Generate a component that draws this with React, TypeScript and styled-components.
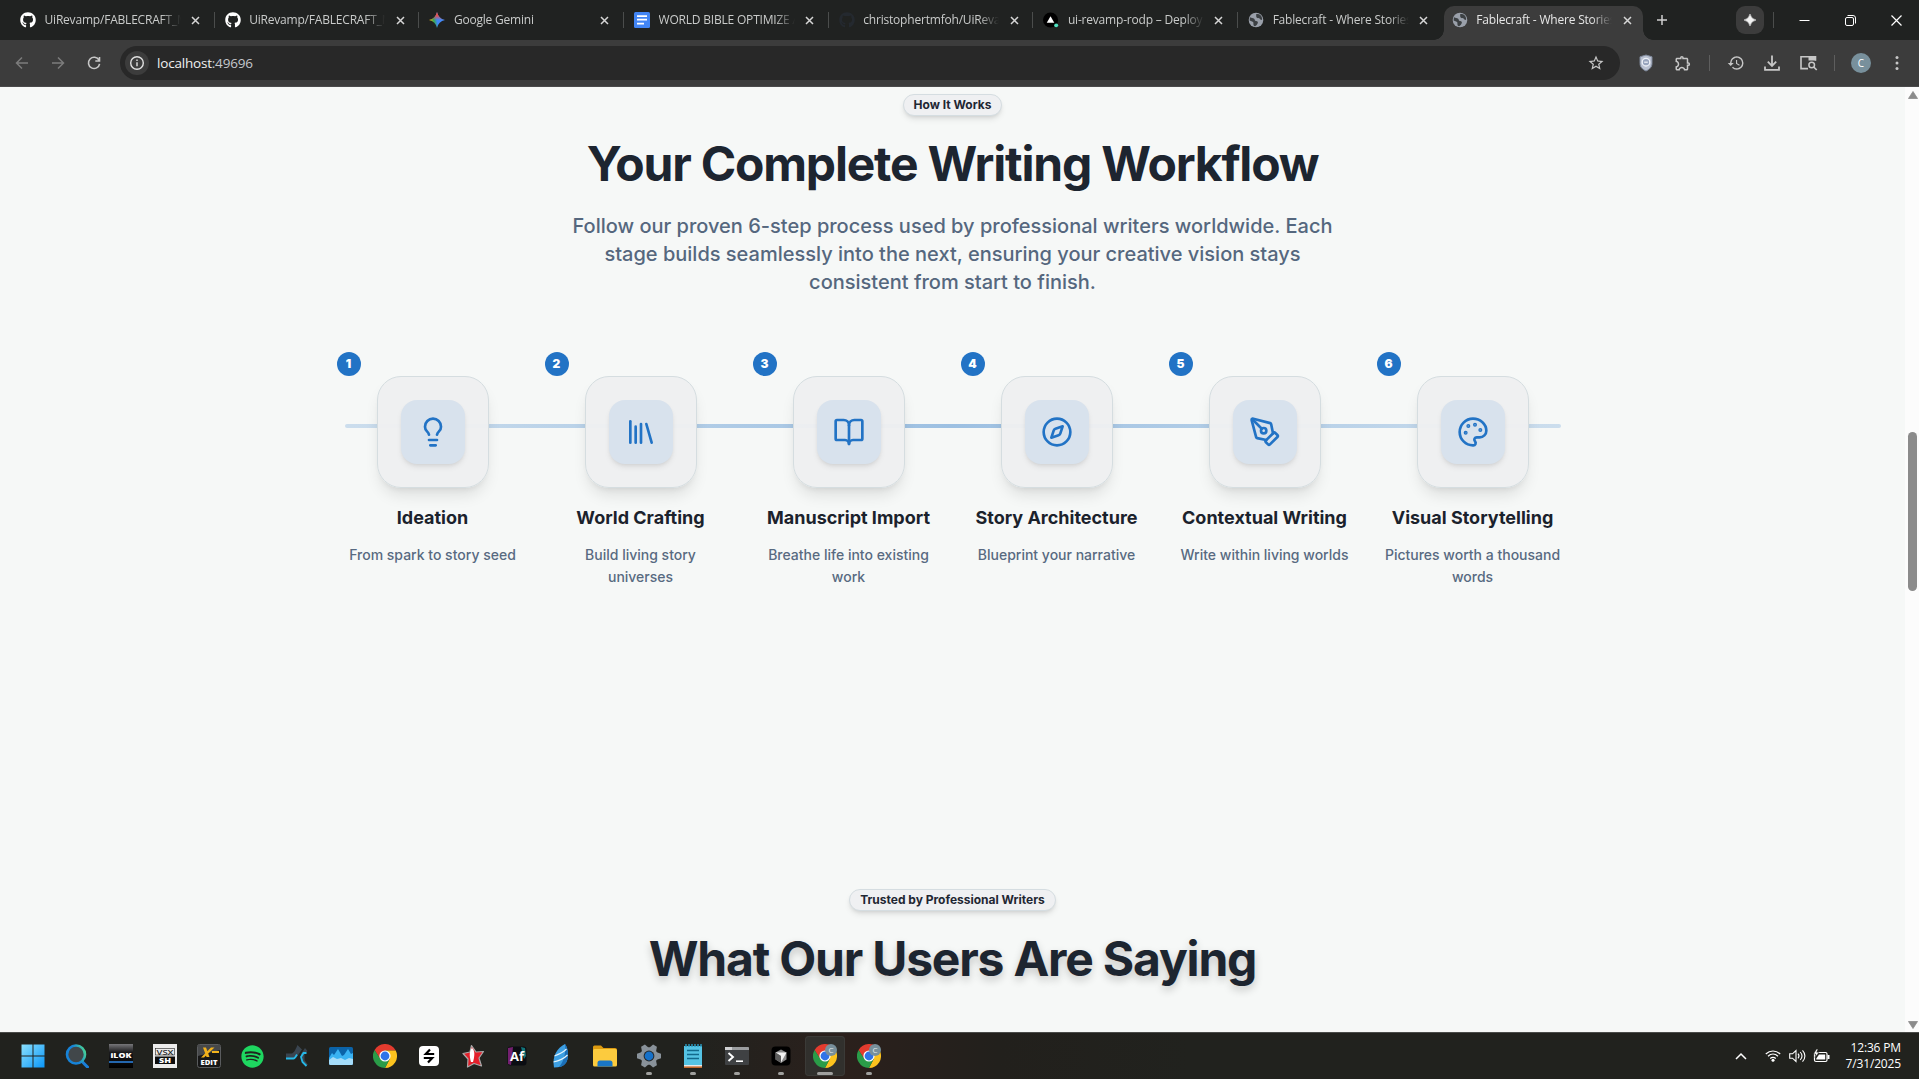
import React from 'react';
import styled, { createGlobalStyle, css } from 'styled-components';
import { Lightbulb, BookOpen, Compass, PenTool, Palette } from 'lucide-react';
import { FaGithub, FaSpotify } from 'react-icons/fa';
import { MdOutlineExtension, MdHistory, MdStarOutline } from 'react-icons/md';

const Global = createGlobalStyle`
  * { box-sizing: border-box; }
  body { margin: 0; background: #f6f8f7; overflow: hidden; }
`;

const ui = `'Segoe UI', 'Open Sans', 'Noto Sans', sans-serif`;

const Screen = styled.div`
  width: 1919px;
  height: 1079px;
  display: flex;
  flex-direction: column;
  overflow: hidden;
  font-family: 'Inter', sans-serif;
`;

/* ---------- browser chrome ---------- */

const TabStrip = styled.div`
  height: 40px;
  flex: none;
  display: flex;
  background: #202221;
  padding-left: 10px;
  font-family: ${ui};
`;

const Tab = styled.div<{ $active?: boolean; $line?: boolean }>`
  position: relative;
  width: 204.7px;
  flex: none;
  height: 34px;
  margin-top: 6px;
  padding: 0 10px 6px 10px;
  display: flex;
  align-items: center;
  color: #c9cbca;
  ${p => p.$line && css`
    &::after {
      content: '';
      position: absolute;
      right: 0;
      top: 6px;
      width: 1px;
      height: 16px;
      background: #4b4d4c;
    }
  `}
  ${p => p.$active && css`
    width: 199px;
    margin-left: 1px;
    padding-left: 8px;
    background: #3c3c3c;
    border-radius: 10px 10px 0 0;
    color: #e6e6e6;
    &::before, &::after {
      content: '';
      position: absolute;
      bottom: 0;
      width: 10px;
      height: 10px;
    }
    &::before { left: -10px; background: radial-gradient(circle at 0 0, transparent 9.5px, #3c3c3c 10px); }
    &::after { right: -10px; background: radial-gradient(circle at 100% 0, transparent 9.5px, #3c3c3c 10px); }
  `}
`;

const Favicon = styled.span`
  width: 16px;
  height: 16px;
  flex: none;
  display: flex;
  svg { display: block; }
`;

const TabTitle = styled.span`
  width: 138px;
  flex: none;
  margin-left: 8.5px;
  font-size: 12px;
  line-height: 16px;
  letter-spacing: -0.2px;
  white-space: nowrap;
  mask-image: linear-gradient(90deg, #000 116px, transparent 136px);
`;

const TabClose = styled.span`
  margin-left: 8.5px;
  display: flex;
`;

const StripEnd = styled.div`
  flex: 1;
  display: flex;
  align-items: center;
  padding-bottom: 0;
  color: #dcdcdc;
`;

const NewTab = styled.span`
  display: flex;
  margin: 0 0 0 13px;
`;

const SparkButton = styled.div`
  width: 28px;
  height: 28px;
  margin-left: auto;
  border-radius: 9px;
  background: #3c3c3c;
  display: flex;
  align-items: center;
  justify-content: center;
`;

const WindowButtons = styled.div`
  margin-left: 9px;
  border-left: 1px solid #4b4d4c;
  height: 16px;
  width: 146px;
  padding-left: 25px;
  display: flex;
  align-items: center;
  gap: 35px;
  svg { display: block; flex: none; }
`;

const Toolbar = styled.div`
  height: 47px;
  flex: none;
  display: flex;
  align-items: center;
  background: #3c3c3c;
  border-bottom: 1px solid #4a4a4b;
  padding: 0 0 0 12px;
  font-family: ${ui};
  color: #c7c7c7;
`;

const ToolSlot = styled.span<{ $dim?: boolean }>`
  width: 36px;
  flex: none;
  display: flex;
  justify-content: center;
  color: ${p => (p.$dim ? '#7c7c7c' : '#c7c7c7')};
`;

const ExtensionGroup = styled.div`
  display: flex;
  align-items: center;
  gap: 1px;
  margin-left: 8px;
`;

const NavGroup = styled.div`
  display: flex;
  width: 108px;
  margin-left: -8px;
`;

const Omnibox = styled.div`
  width: 1500px;
  height: 34px;
  flex: none;
  margin-left: 8px;
  border-radius: 17px;
  background: #282828;
  display: flex;
  align-items: center;
  padding: 0 15px 0 5px;
`;

const InfoChip = styled.span`
  width: 24px;
  height: 24px;
  border-radius: 12px;
  background: #3c3c3c;
  display: flex;
  align-items: center;
  justify-content: center;
`;

const Url = styled.span`
  flex: 1;
  margin-left: 8px;
  font-size: 13.5px;
  letter-spacing: -0.2px;
  color: #f0f0f0;
  span { color: #c4c7cc; }
`;

const ToolSeparator = styled.span`
  width: 1px;
  height: 16px;
  margin: 0 8px;
  background: #5e5e5e;
`;

const Avatar = styled.span`
  width: 20px;
  height: 20px;
  border-radius: 10px;
  background: #78909c;
  color: #fff;
  font-size: 10px;
  line-height: 20px;
  text-align: center;
`;

/* ---------- page ---------- */

const Viewport = styled.div`
  height: 945px;
  flex: none;
  display: flex;
  background: #f6f8f7;
`;

const Page = styled.main`
  width: 1905px;
  height: 945px;
  overflow: hidden;
  display: flex;
  flex-direction: column;
  align-items: center;
  padding-top: 7px;
`;

const Pill = styled.span`
  height: 22px;
  padding: 0 10px;
  border: 1px solid #d5dde1;
  border-radius: 11px;
  background: #eff0f2;
  box-shadow: 0 4px 6px -1px rgba(0, 0, 0, 0.1), 0 2px 4px -2px rgba(0, 0, 0, 0.12);
  color: #1f2733;
  font-size: 12px;
  font-weight: 700;
  letter-spacing: -0.01px;
  line-height: 20px;
`;

const Heading = styled.h2<{ $raised?: boolean }>`
  margin: 24px 0 0;
  font-size: 48px;
  line-height: 48px;
  font-weight: 700;
  letter-spacing: -0.025em;
  color: #1d2530;
  text-shadow: ${p => (p.$raised ? '0 4px 8px rgba(0, 0, 0, 0.2)' : 'none')};
`;

const Lead = styled.p`
  width: 768px;
  margin: 24px 0 0;
  font-size: 20px;
  line-height: 28px;
  font-weight: 500;
  text-align: center;
  color: #55677e;
`;

const Steps = styled.section`
  position: relative;
  width: 1216px;
  height: 529px;
  flex: none;
  margin-top: 64px;
  display: grid;
  grid-template-columns: repeat(6, 176px);
  column-gap: 32px;
  align-content: start;
`;

const Rail = styled.div`
  position: absolute;
  left: 0;
  right: 0;
  top: 64px;
  height: 4px;
  border-radius: 2px;
  background: linear-gradient(90deg, rgba(34, 115, 197, 0.2), rgba(34, 115, 197, 0.42), rgba(34, 115, 197, 0.2));
`;

const Step = styled.article`
  position: relative;
  padding-top: 16px;
  display: flex;
  flex-direction: column;
  align-items: center;
  text-align: center;
`;

const StepNumber = styled.span`
  position: absolute;
  left: -8px;
  top: -8px;
  width: 24px;
  height: 24px;
  border-radius: 12px;
  background: #2273c5;
  color: #fff;
  font-size: 12px;
  font-weight: 900;
  line-height: 24px;
`;

const StepCard = styled.div`
  width: 112px;
  height: 112px;
  padding: 23px;
  border: 1px solid #d5dde0;
  border-radius: 24px;
  background: rgba(238, 239, 241, 0.97);
  box-shadow: 0 10px 15px -3px rgba(0, 0, 0, 0.1), 0 4px 6px -4px rgba(0, 0, 0, 0.1);
`;

const StepTile = styled.div`
  width: 64px;
  height: 64px;
  border-radius: 16px;
  background: #d8e2ed;
  box-shadow: 0 4px 6px -1px rgba(0, 0, 0, 0.08), 0 2px 4px -2px rgba(0, 0, 0, 0.1);
  color: #2273c5;
  display: flex;
  align-items: center;
  justify-content: center;
`;

const StepTitle = styled.h3`
  margin: 16px 0 0;
  font-size: 18px;
  line-height: 28px;
  font-weight: 700;
  white-space: nowrap;
  color: #1b222c;
`;

const StepText = styled.p`
  margin: 12px 0 0;
  font-size: 14px;
  line-height: 22px;
  font-weight: 500;
  color: #586a81;
`;

const ScrollTrack = styled.div`
  width: 14px;
  background: #fcfcfc;
  display: flex;
  flex-direction: column;
  align-items: center;
  padding: 4px 0 3px 1px;
`;

const ScrollThumb = styled.div`
  width: 9px;
  height: 159px;
  margin-top: 333px;
  margin-bottom: auto;
  border-radius: 4.5px;
  background: #8b8b8b;
`;

/* ---------- taskbar ---------- */

const Taskbar = styled.footer`
  height: 47px;
  flex: none;
  display: flex;
  align-items: center;
  justify-content: space-between;
  padding: 0 18px 0 12.5px;
  background: linear-gradient(90deg, #21221e 0, #21221e 36%, #2b201c 44%, #22201c 52%, #21221e 62%);
  border-top: 1px solid #4a4b49;
  color: #fff;
  font-family: ${ui};
`;

const AppRow = styled.div`
  display: flex;
  gap: 4px;
`;

const AppSlot = styled.div<{ $active?: boolean; $running?: boolean }>`
  position: relative;
  width: 40px;
  height: 40px;
  border-radius: 4px;
  display: flex;
  align-items: center;
  justify-content: center;
  ${p => p.$active && css`
    background: #31302d;
    box-shadow: inset 0 0 0 1px #3b3a37;
  `}
  ${p => p.$running && css`
    &::after {
      content: '';
      position: absolute;
      left: 50%;
      bottom: 1px;
      width: ${p.$active ? 16 : 6}px;
      height: 3px;
      border-radius: 2px;
      transform: translateX(-50%);
      background: #a0a09e;
    }
  `}
`;

const Tray = styled.div`
  display: flex;
  align-items: center;
  svg { display: block; }
`;

const TrayIcons = styled.div`
  display: flex;
  gap: 7.5px;
  margin-left: 18px;
`;

const Clock = styled.div`
  width: 71px;
  font-size: 12px;
  line-height: 16px;
  text-align: right;
  letter-spacing: -0.15px;
`;

/* ---------- small drawings ---------- */

const GeminiMark = () => (
  <svg width="16" height="16" viewBox="0 0 16 16">
    <defs>
      <linearGradient id="gem" x1="0" y1="0.6" x2="1" y2="0.4">
        <stop offset="0.05" stopColor="#f6c30e" />
        <stop offset="0.3" stopColor="#34a853" />
        <stop offset="0.5" stopColor="#3f86f5" />
        <stop offset="1" stopColor="#4b8df8" />
      </linearGradient>
      <linearGradient id="gemTop" x1="0" y1="0" x2="0" y2="1">
        <stop offset="0.2" stopColor="#ee4d42" />
        <stop offset="0.5" stopColor="#ee4d42" stopOpacity="0" />
      </linearGradient>
    </defs>
    <path d="M8 0C9 4.400 11.600 7 16 8 11.600 9 9 11.600 8 16 7 11.600 4.400 9 0 8 4.400 7 7 4.400 8 0Z" fill="url(#gem)" />
    <path d="M8 0C9 4.400 11.600 7 16 8 11.600 9 9 11.600 8 16 7 11.600 4.400 9 0 8 4.400 7 7 4.400 8 0Z" fill="url(#gemTop)" />
  </svg>
);

const DocsMark = () => (
  <svg width="16" height="16" viewBox="0 0 16 16">
    <rect width="16" height="16" rx="1.5" fill="#4285f4" />
    <path d="M3 4.2h10M3 7.7h10M3 11.7h7" stroke="#fff" strokeWidth="1.7" />
  </svg>
);

const VercelMark = () => (
  <svg width="17" height="16" viewBox="0 0 17 16">
    <circle cx="8" cy="8" r="8" fill="#000" />
    <path d="M8 4l4 7H4z" fill="#fff" />
    <circle cx="14" cy="13.7" r="2.1" fill="#50e3c2" />
  </svg>
);

const GlobeMark = () => (
  <svg width="16" height="16" viewBox="0 0 16 16">
    <circle cx="8" cy="8" r="7.3" fill="#9aa0aa" />
    <path d="M2 5.2c1.600 1 3 .4 4.200 1.600 1 1 .2 2 1.800 2.200 1.600.2 2.300 1 1.700 2.200-.5 1-.8 1.800-2.700 3.100-2-.4-1.500-2.300-1.600-3.700C5.200 9.200 3.400 9.400 1.600 8.400ZM8.200 2.100c1.200-.4 3 0 4 .9 1.600 1.400 2 3 1.900 4.800-1 .3-1.900-.2-2.300-1.100-.5-1-2.400-.3-3.200-1.300-.7-1-.3-1.500-.4-3.300Z" fill="#3c4043" />
  </svg>
);

const CloseMark = () => (
  <svg width="9" height="9" viewBox="0 0 9 9">
    <path d="M1 1l7 7M8 1L1 8" stroke="#d6d6d6" strokeWidth="1.5" />
  </svg>
);

const ArrowMark = ({ flip }: { flip?: boolean }) => (
  <svg width="16" height="16" viewBox="0 0 16 16">
    <path
      d="M14 8H2.700M8 2.500L2.500 8 8 13.500"
      transform={flip ? 'translate(16 0) scale(-1 1)' : undefined}
      fill="none"
      stroke="currentColor"
      strokeWidth="1.500"
    />
  </svg>
);

const ReloadMark = () => (
  <svg width="16" height="16" viewBox="0 0 16 16">
    <path d="M13 5.200A5.600 5.600 0 1 0 13.600 8.800M13.500 1.900v4.100H9.300" fill="none" stroke="currentColor" strokeWidth="1.600" />
  </svg>
);

const InfoMark = () => (
  <svg width="16" height="16" viewBox="0 0 16 16">
    <circle cx="8" cy="8" r="6.300" fill="none" stroke="#e0e0e0" strokeWidth="1.400" />
    <path d="M8 7.200v4M8 4.500v1.500" stroke="#e0e0e0" strokeWidth="1.400" />
  </svg>
);

const ShieldMark = () => (
  <svg width="16" height="18" viewBox="0 0 16 18">
    <path d="M8 1l6 1.800v6.700c0 3.500-2.600 6-6 7.500-3.400-1.500-6-4-6-7.500V2.800z" fill="#b9c0d0" stroke="#7c8698" />
    <circle cx="8" cy="8.200" r="3.800" fill="#98a4bd" stroke="#eef1f8" strokeWidth="1.300" />
    <path d="M6.200 8.200h3.600" stroke="#eef1f8" strokeWidth="1.200" />
  </svg>
);

const DownloadMark = () => (
  <svg width="18" height="18" viewBox="0 0 18 18">
    <path d="M9 1.500v10M4.800 7.700L9 11.900l4.200-4.200M2 12.500v3.300h14v-3.300" fill="none" stroke="currentColor" strokeWidth="1.800" />
  </svg>
);

const PanelSearchMark = () => (
  <svg width="19" height="18" viewBox="0 0 19 18">
    <path d="M9 14.600H2V2.800h14.500v4" fill="none" stroke="currentColor" strokeWidth="1.600" />
    <path d="M9.500 2.500h7v4h-7z" fill="currentColor" />
    <circle cx="12.700" cy="11" r="2.800" fill="none" stroke="currentColor" strokeWidth="1.500" />
    <path d="M14.700 13l3 3" stroke="currentColor" strokeWidth="1.700" />
  </svg>
);

const DotsMark = () => (
  <svg width="4" height="16" viewBox="0 0 4 16" fill="currentColor">
    <circle cx="2" cy="2.500" r="1.500" />
    <circle cx="2" cy="8" r="1.500" />
    <circle cx="2" cy="13.500" r="1.500" />
  </svg>
);

const ChromeMark = ({ profile }: { profile?: boolean }) => (
  <svg width="24" height="24" viewBox="0 0 24 24">
    <path d="M12 6.500h10.700L22.400 6A12 12 0 0 0 1.600 6l5.600 9z" fill="#e33b2e" />
    <path d="M16.800 14.700L12 24A12 12 0 0 0 22.700 6.500H12z" fill="#fcc31e" />
    <path d="M7.200 14.700L1.600 6A12 12 0 0 0 12 24l4.800-9.200z" fill="#2a9c48" />
    <circle cx="12" cy="12" r="5.600" fill="#fff" />
    <circle cx="12" cy="12" r="4.400" fill="#2f74e8" />
    {profile && (
      <>
        <circle cx="18" cy="6" r="6" fill="#78909c" />
        <text x="18" y="9" textAnchor="middle" fontFamily="Open Sans, sans-serif" fontSize="8" fill="#e6ecef">C</text>
      </>
    )}
  </svg>
);

const StartMark = () => (
  <svg width="24" height="24" viewBox="0 0 24 24">
    <defs>
      <linearGradient id="win" x1="0" y1="0" x2="1" y2="1">
        <stop offset="0" stopColor="#8be0fd" />
        <stop offset="1" stopColor="#0a96f8" />
      </linearGradient>
    </defs>
    <path d="M.5.500h11v11H.5zM12.500.500h11v11h-11zM.5 12.500h11v11H.5zM12.500 12.500h11v11h-11z" fill="url(#win)" />
  </svg>
);

const SearchMark = () => (
  <svg width="24" height="24" viewBox="0 0 24 24">
    <defs>
      <linearGradient id="srch" x1="0" y1="0.400" x2="1" y2="0">
        <stop offset="0.400" stopColor="#1683d8" />
        <stop offset="1" stopColor="#4fdf8b" />
      </linearGradient>
    </defs>
    <path d="M16.500 17l6 6" stroke="#1a7fd8" strokeWidth="3" strokeLinecap="round" />
    <circle cx="11" cy="10.500" r="9" fill="#41474a" stroke="url(#srch)" strokeWidth="2.600" />
  </svg>
);

const boxText = { fontFamily: 'Open Sans, sans-serif', fontWeight: 800, textAnchor: 'middle' as const };

const IlokMark = () => (
  <svg width="24" height="24" viewBox="0 0 24 24">
    <defs>
      <linearGradient id="ilok" x1="0" y1="0" x2="0" y2="1">
        <stop offset="0" stopColor="#77777a" />
        <stop offset="0.350" stopColor="#1a1a1c" />
        <stop offset="1" stopColor="#000" />
      </linearGradient>
    </defs>
    <rect width="24" height="24" fill="url(#ilok)" />
    <text x="12" y="13.500" {...boxText} fontSize="7.500" textLength="21" lengthAdjust="spacingAndGlyphs" fill="#fff">iLOK</text>
    <path d="M0 18h24" stroke="#2b7fd8" strokeWidth="1.600" />
  </svg>
);

const VsxMark = () => (
  <svg width="24" height="24" viewBox="0 0 24 24">
    <rect width="24" height="24" fill="#ececec" />
    <rect x="2.500" y="4.500" width="19" height="6.500" fill="none" stroke="#222" strokeWidth=".6" />
    <text x="12" y="10.500" {...boxText} fontWeight={600} fontSize="7.500" textLength="17" lengthAdjust="spacingAndGlyphs" fill="#222">VSX</text>
    <rect x="2" y="12.500" width="20" height="7.500" fill="#0d0d0d" />
    <text x="12" y="18.600" {...boxText} fontSize="6.500" textLength="12" lengthAdjust="spacingAndGlyphs" fill="#fff">SH</text>
  </svg>
);

const XEditMark = () => (
  <svg width="24" height="24" viewBox="0 0 24 24">
    <rect x=".5" y=".5" width="23" height="23" rx="2" fill="#171717" stroke="#5a5c5e" />
    <path d="M1 1h22v5L1 12z" fill="#46484a" />
    <path d="M6 3.500h3L12.500 13h-3zM14 3.500h3.500L7 13.500H4z" fill="#f2b21c" />
    <path d="M15 8h7" stroke="#f2b21c" strokeWidth="2" />
    <text x="12" y="20.500" {...boxText} fontSize="7" textLength="17" lengthAdjust="spacingAndGlyphs" fill="#fff">EDIT</text>
  </svg>
);

const WingMark = () => (
  <svg width="24" height="24" viewBox="0 0 24 24">
    <path d="M1 9.500h6C10 8 11 4 12.500 1L17 5.500 11 14H1z" fill="#3a4550" />
    <path d="M1 14.500h7.500c1.500 0 2-1.500 3.500-4" fill="none" stroke="#25b9e8" strokeWidth="1.800" />
    <path d="M20 4l2.500 3-3 3v6l3.500 5h-3l-4-5v-6z" fill="#3a4550" />
    <path d="M21.500 9h-3l-2.500 4 1.500 5 4 4" fill="none" stroke="#25b9e8" strokeWidth="1.800" />
  </svg>
);

const WaveMark = () => (
  <svg width="24" height="24" viewBox="0 0 24 24">
    <rect y="3" width="24" height="18" rx="1.500" fill="#0b63a8" />
    <path d="M0 14l3-5 2 2 4-6 4 7 2-1 4-6 3 5 2-1v8H0z" fill="#39b2f2" />
    <path d="M0 16l4-3 4 2 4-1 4 2 4-2 4 1v4.500A1.500 1.500 0 0 1 22.500 21h-21A1.500 1.500 0 0 1 0 19.500z" fill="#a5dcf9" />
  </svg>
);

const BoltMark = () => (
  <svg width="24" height="24" viewBox="0 0 24 24">
    <rect x="2" y="2" width="20" height="20" rx="4" fill="#fff" />
    <path d="M13 5.500L8.800 10h8.400M11 18.500l4.200-4.500H6.800" fill="none" stroke="#000" strokeWidth="2.200" />
  </svg>
);

const StarMark = () => (
  <svg width="24" height="24" viewBox="0 0 24 24">
    <path d="M10.500 1.500l4.500 6.500 7.500-.5-4.500 6.500 2.500 8-7.500-2.500-6.500 3.500.5-8-5-5.500 7-1.500z" fill="#e3202b" stroke="#a9a9a9" strokeWidth="1.200" strokeLinejoin="round" />
    <path d="M11 4c3 2 2.800 8 1 14h-2C8 12 8.500 6 11 4z" fill="#fff" />
  </svg>
);

const AfMark = () => (
  <svg width="24" height="24" viewBox="0 0 24 24">
    <rect x="2.500" y="2.500" width="19" height="19" rx="3" fill="#0b0d12" />
    <path d="M3 4l5-1-2 18-3-1z" fill="#74206f" />
    <path d="M16 3l4 1 1 8-2 3z" fill="#12757a" />
    <text x="12" y="17" textAnchor="middle" fontFamily="Open Sans, sans-serif" fontWeight="700" fontSize="13" fill="#fff">Af</text>
  </svg>
);

const QuillMark = () => (
  <svg width="24" height="24" viewBox="0 0 24 24">
    <path d="M16 0c4 5 4 16 0 20-2 2.500-6 3.500-11 3.500C3 12 8 4 16 0z" fill="#3d9fe2" />
    <path d="M16 0c4 5 4 16 0 20-2 2.500-5 3-6 3 5-6 7-14 6-23z" fill="#1b6fb8" />
    <path d="M5.500 12c4-1.500 8-3 12-7M4.500 18c5-1 10-3 14-7" fill="none" stroke="#e4f4fd" strokeWidth="1.200" />
  </svg>
);

const FolderMark = () => (
  <svg width="24" height="24" viewBox="0 0 24 24">
    <path d="M0 3a1.500 1.500 0 0 1 1.500-1.500H8L10.500 4H22a2 2 0 0 1 2 2v4H0z" fill="#dc9a10" />
    <rect y="5" width="24" height="17.500" rx="1.500" fill="#fccb3e" />
    <path d="M4.500 22.500V19a2.500 2.500 0 0 1 2.500-2.500h10a2.500 2.500 0 0 1 2.500 2.500v3.500z" fill="#1976c5" />
  </svg>
);

const GearMark = () => (
  <svg width="24" height="24" viewBox="0 0 24 24">
    <g fill="#89929a">
      <circle cx="12" cy="12" r="8.800" />
      {[30, 90, 150, 210, 270, 330].map(a => (
        <path key={a} d="M9.800 0h4.400l1.800 5h-8z" transform={`rotate(${a} 12 12)`} />
      ))}
    </g>
    <circle cx="12" cy="12" r="5.400" fill="#26282a" />
    <circle cx="12" cy="12" r="4.400" fill="#1671c9" />
  </svg>
);

const NotepadMark = () => (
  <svg width="24" height="24" viewBox="0 0 24 24">
    <rect x="3" y="2" width="18" height="19" fill="#55c3e4" />
    <path d="M3 21h18v3H3z" fill="#e9e9e9" />
    <path d="M3 23.200h18" stroke="#c06020" strokeWidth="1.500" />
    <path d="M5 0v3M8 0v3M11 0v3M14 0v3M17 0v3M20 0v3" stroke="#2a9cc4" strokeWidth="1.400" />
    <path d="M6 6.500h12M6 10.500h12M6 14.500h12" stroke="#12698c" strokeWidth="1.500" />
  </svg>
);

const TerminalMark = () => (
  <svg width="24" height="24" viewBox="0 0 24 24">
    <rect y="3" width="24" height="18" rx="1" fill="#3f4143" />
    <path d="M0 6V4a1 1 0 0 1 1-1h22a1 1 0 0 1 1 1v2z" fill="#9b9d9f" />
    <path d="M0 3h7v3H0z" fill="#cfd0d2" />
    <path d="M3.500 9l4.500 4-4.500 4" fill="none" stroke="#fff" strokeWidth="1.900" />
    <path d="M11 17.200h7" stroke="#fff" strokeWidth="1.600" />
  </svg>
);

const CubeMark = () => (
  <svg width="24" height="24" viewBox="0 0 24 24">
    <rect x="2.500" y="2.500" width="19" height="19" rx="4" fill="#000" />
    <path d="M12 5.500l5.500 3v7L12 19l-5.500-3.500v-7z" fill="#8c8c8c" />
    <path d="M6.500 8.500h11L12 18.500V12z" fill="#f2f2f2" />
    <path d="M6.500 8.500L12 12v6.500L6.500 15.500z" fill="#5d5d5d" />
  </svg>
);

const WifiMark = () => (
  <svg width="16" height="13" viewBox="0 0 16 13">
    <path d="M.8 5C5 1 11 1 15.200 5M3 7.300c3-2.800 7-2.800 10 0M5.200 9.500c1.700-1.500 3.900-1.500 5.600 0" fill="none" stroke="#fff" strokeWidth="1.200" />
    <circle cx="8" cy="11.200" r="1.500" fill="#fff" />
  </svg>
);

const SpeakerMark = () => (
  <svg width="17" height="14" viewBox="0 0 17 14">
    <path d="M.7 4.800h2.800L7 1.500v11L3.500 9.200H.7z" fill="none" stroke="#fff" strokeWidth="1.100" />
    <path d="M9 4.700c1.200 1.400 1.200 3.200 0 4.600M11.200 3c2.200 2.400 2.200 5.600 0 8M13.500 1.300c3.200 3.400 3.200 8 0 11.400" fill="none" stroke="#fff" strokeWidth="1.100" />
  </svg>
);

const BatteryMark = () => (
  <svg width="17" height="14" viewBox="0 0 17 14">
    <rect x="1.500" y="3.500" width="12.500" height="9" rx="1.500" fill="none" stroke="#fff" strokeWidth="1.200" />
    <path d="M6 5.500h6.200v5H3.300V9.500z" fill="#fff" />
    <path d="M14.500 6h2v4h-2z" fill="#fff" />
    <path d="M3.500 0L.5 5h2.200L2 8.500 6 3.300H3.700L5 0z" fill="#fff" stroke="#21221e" strokeWidth=".5" />
  </svg>
);

/* Four upright book spines, the last one leaning. */
const BooksIcon = ({ size = 24, strokeWidth = 2 }: { size?: number; strokeWidth?: number }) => (
  <svg width={size} height={size} viewBox="0 0 24 24" fill="none" stroke="currentColor" strokeWidth={strokeWidth} strokeLinecap="round" strokeLinejoin="round">
    <path d="m16 6 4 14" />
    <path d="M12 6v14" />
    <path d="M8 8v12" />
    <path d="M4 4v16" />
  </svg>
);

/* ---------- data ---------- */

const tabs = [
  { title: 'UiRevamp/FABLECRAFT_M', icon: <FaGithub size={16} color="#fff" /> },
  { title: 'UiRevamp/FABLECRAFT_M', icon: <FaGithub size={16} color="#fff" /> },
  { title: 'Google Gemini', icon: <GeminiMark /> },
  { title: 'WORLD BIBLE OPTIMIZE A', icon: <DocsMark /> },
  { title: 'christophertmfoh/UiReva', icon: <FaGithub size={16} color="#24292f" /> },
  { title: 'ui-revamp-rodp – Deploy', icon: <VercelMark /> },
  { title: 'Fablecraft - Where Stories', icon: <GlobeMark /> },
];

const steps = [
  { title: 'Ideation', text: 'From spark to story seed', Icon: Lightbulb },
  { title: 'World Crafting', text: 'Build living story universes', Icon: BooksIcon },
  { title: 'Manuscript Import', text: 'Breathe life into existing work', Icon: BookOpen },
  { title: 'Story Architecture', text: 'Blueprint your narrative', Icon: Compass },
  { title: 'Contextual Writing', text: 'Write within living worlds', Icon: PenTool },
  { title: 'Visual Storytelling', text: 'Pictures worth a thousand words', Icon: Palette },
];

const apps: { icon: React.ReactNode; running?: boolean; active?: boolean }[] = [
  { icon: <StartMark /> },
  { icon: <SearchMark /> },
  { icon: <IlokMark /> },
  { icon: <VsxMark /> },
  { icon: <XEditMark /> },
  { icon: <FaSpotify size={23} color="#1ed760" /> },
  { icon: <WingMark /> },
  { icon: <WaveMark /> },
  { icon: <ChromeMark /> },
  { icon: <BoltMark /> },
  { icon: <StarMark /> },
  { icon: <AfMark /> },
  { icon: <QuillMark /> },
  { icon: <FolderMark /> },
  { icon: <GearMark />, running: true },
  { icon: <NotepadMark />, running: true },
  { icon: <TerminalMark />, running: true },
  { icon: <CubeMark />, running: true },
  { icon: <ChromeMark profile />, running: true, active: true },
  { icon: <ChromeMark profile />, running: true },
];

export default function App() {
  return (
    <Screen>
      <Global />
      <TabStrip>
        {tabs.map((t, i) => (
          <Tab key={i} $line={i < tabs.length - 1}>
            <Favicon>{t.icon}</Favicon>
            <TabTitle>{t.title}</TabTitle>
            <TabClose><CloseMark /></TabClose>
          </Tab>
        ))}
        <Tab $active>
          <Favicon><GlobeMark /></Favicon>
          <TabTitle>Fablecraft - Where Stories</TabTitle>
          <TabClose><CloseMark /></TabClose>
        </Tab>
        <StripEnd>
          <NewTab>
            <svg width="12" height="12" viewBox="0 0 12 12"><path d="M6 1v10M1 6h10" stroke="#d0d0d0" strokeWidth="1.500" /></svg>
          </NewTab>
          <SparkButton>
            <svg width="14" height="14" viewBox="0 0 14 14"><path d="M7 1Q8 6 13 7 8 8 7 13 6 8 1 7 6 6 7 1Z" fill="#f2f2f2" stroke="#f2f2f2" strokeWidth=".5" /></svg>
          </SparkButton>
          <WindowButtons>
            <svg width="11" height="11" viewBox="0 0 11 11"><path d="M.5 5.500h10" stroke="#fff" /></svg>
            <svg width="11" height="11" viewBox="0 0 11 11" fill="none" stroke="#fff"><rect x=".5" y="2.500" width="8" height="8" rx="1.500" /><path d="M2.500.5H8A2.500 2.500 0 0 1 10.500 3v5.500" /></svg>
            <svg width="11" height="11" viewBox="0 0 11 11"><path d="M.5.500l10 10M10.500.5l-10 10" stroke="#fff" strokeWidth="1.200" /></svg>
          </WindowButtons>
        </StripEnd>
      </TabStrip>

      <Toolbar>
        <NavGroup>
          <ToolSlot $dim><ArrowMark /></ToolSlot>
          <ToolSlot $dim><ArrowMark flip /></ToolSlot>
          <ToolSlot><ReloadMark /></ToolSlot>
        </NavGroup>
        <Omnibox>
          <InfoChip><InfoMark /></InfoChip>
          <Url>localhost<span>:49696</span></Url>
          <MdStarOutline size={18} />
        </Omnibox>
        <ExtensionGroup>
          <ToolSlot><ShieldMark /></ToolSlot>
          <ToolSlot><MdOutlineExtension size={18} /></ToolSlot>
        </ExtensionGroup>
        <ToolSeparator />
        <ToolSlot><MdHistory size={18} /></ToolSlot>
        <ToolSlot><DownloadMark /></ToolSlot>
        <ToolSlot><PanelSearchMark /></ToolSlot>
        <ToolSeparator />
        <ToolSlot><Avatar>C</Avatar></ToolSlot>
        <ToolSlot><DotsMark /></ToolSlot>
      </Toolbar>

      <Viewport>
        <Page>
          <Pill>How It Works</Pill>
          <Heading>Your Complete Writing Workflow</Heading>
          <Lead>
            Follow our proven 6-step process used by professional writers worldwide. Each stage builds
            seamlessly into the next, ensuring your creative vision stays consistent from start to finish.
          </Lead>
          <Steps>
            <Rail />
            {steps.map(({ title, text, Icon }, i) => (
              <Step key={title}>
                <StepNumber>{i + 1}</StepNumber>
                <StepCard>
                  <StepTile><Icon size={32} strokeWidth={2} /></StepTile>
                </StepCard>
                <StepTitle>{title}</StepTitle>
                <StepText>{text}</StepText>
              </Step>
            ))}
          </Steps>
          <Pill>Trusted by Professional Writers</Pill>
          <Heading $raised>What Our Users Are Saying</Heading>
        </Page>
        <ScrollTrack>
          <svg width="10" height="8" viewBox="0 0 10 8"><path d="M5 .5L9.500 7.500h-9z" fill="#8b8b8b" stroke="#8b8b8b" strokeLinejoin="round" strokeWidth=".8" /></svg>
          <ScrollThumb />
          <svg width="10" height="8" viewBox="0 0 10 8"><path d="M5 7.500L9.500.500h-9z" fill="#8b8b8b" stroke="#8b8b8b" strokeLinejoin="round" strokeWidth=".8" /></svg>
        </ScrollTrack>
      </Viewport>

      <Taskbar>
        <AppRow>
          {apps.map((a, i) => (
            <AppSlot key={i} $active={a.active} $running={a.running}>{a.icon}</AppSlot>
          ))}
        </AppRow>
        <Tray>
          <svg width="12" height="8" viewBox="0 0 12 8"><path d="M1 7l5-5 5 5" fill="none" stroke="#fff" strokeWidth="1.500" /></svg>
          <TrayIcons>
            <WifiMark />
            <SpeakerMark />
            <BatteryMark />
          </TrayIcons>
          <Clock>12:36 PM<br />7/31/2025</Clock>
        </Tray>
      </Taskbar>
    </Screen>
  );
}
